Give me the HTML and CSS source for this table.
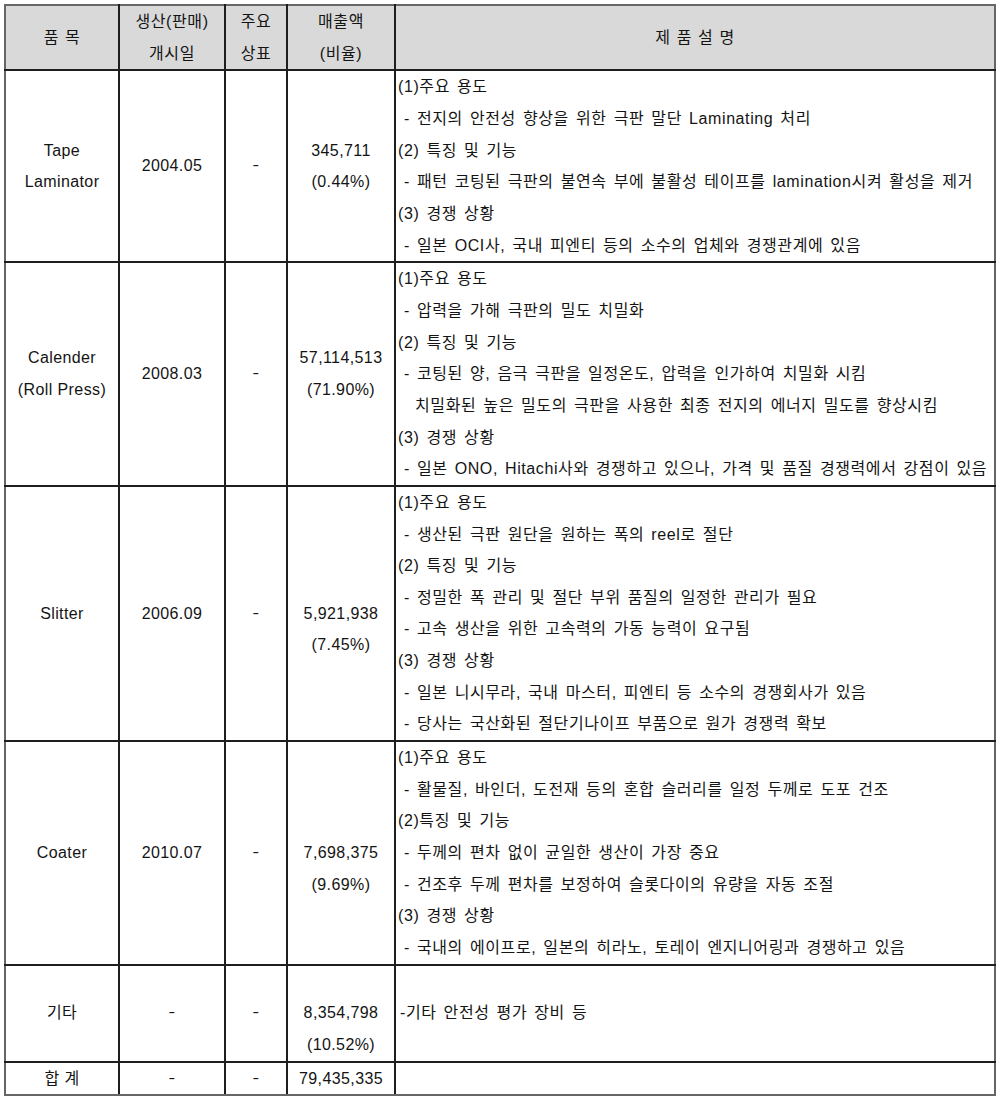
FILE: index.html
```html
<!DOCTYPE html>
<html lang="ko">
<head>
<meta charset="utf-8">
<title>제품 현황</title>
<link rel="stylesheet" href="styles.css">
</head>
<body>
<table class="prod">
  <colgroup>
    <col class="c1"><col class="c2"><col class="c3"><col class="c4"><col class="c5">
  </colgroup>
  <thead>
    <tr>
      <th>품 목</th>
      <th>생산(판매)<br>개시일</th>
      <th>주요<br>상표</th>
      <th>매출액<br>(비율)</th>
      <th>제 품 설 명</th>
    </tr>
  </thead>
  <tbody>
    <tr>
      <td>Tape<br>Laminator</td>
      <td>2004.05</td>
      <td class="dash">-</td>
      <td>345,711<br>(0.44%)</td>
      <td class="desc">
        <div class="h">(1)주요 용도</div>
        <div class="s">- 전지의 안전성 향상을 위한 극판 말단 Laminating 처리</div>
        <div class="h">(2) 특징 및 기능</div>
        <div class="s">- 패턴 코팅된 극판의 불연속 부에 불활성 테이프를 lamination시켜 활성을 제거</div>
        <div class="h">(3) 경쟁 상황</div>
        <div class="s">- 일본 OCI사, 국내 피엔티 등의 소수의 업체와 경쟁관계에 있음</div>
      </td>
    </tr>
    <tr>
      <td>Calender<br>(Roll Press)</td>
      <td>2008.03</td>
      <td class="dash">-</td>
      <td>57,114,513<br>(71.90%)</td>
      <td class="desc">
        <div class="h">(1)주요 용도</div>
        <div class="s">- 압력을 가해 극판의 밀도 치밀화</div>
        <div class="h">(2) 특징 및 기능</div>
        <div class="s">- 코팅된 양, 음극 극판을 일정온도, 압력을 인가하여 치밀화 시킴</div>
        <div class="s2">치밀화된 높은 밀도의 극판을 사용한 최종 전지의 에너지 밀도를 향상시킴</div>
        <div class="h">(3) 경쟁 상황</div>
        <div class="s">- 일본 ONO, Hitachi사와 경쟁하고 있으나, 가격 및 품질 경쟁력에서 강점이 있음</div>
      </td>
    </tr>
    <tr>
      <td>Slitter</td>
      <td>2006.09</td>
      <td class="dash">-</td>
      <td class="lead">5,921,938<br>(7.45%)</td>
      <td class="desc">
        <div class="h">(1)주요 용도</div>
        <div class="s">- 생산된 극판 원단을 원하는 폭의 reel로 절단</div>
        <div class="h">(2) 특징 및 기능</div>
        <div class="s">- 정밀한 폭 관리 및 절단 부위 품질의 일정한 관리가 필요</div>
        <div class="s">- 고속 생산을 위한 고속력의 가동 능력이 요구됨</div>
        <div class="h">(3) 경쟁 상황</div>
        <div class="s">- 일본 니시무라, 국내 마스터, 피엔티 등 소수의 경쟁회사가 있음</div>
        <div class="s">- 당사는 국산화된 절단기나이프 부품으로 원가 경쟁력 확보</div>
      </td>
    </tr>
    <tr>
      <td>Coater</td>
      <td>2010.07</td>
      <td class="dash">-</td>
      <td class="lead">7,698,375<br>(9.69%)</td>
      <td class="desc">
        <div class="h">(1)주요 용도</div>
        <div class="s">- 활물질, 바인더, 도전재 등의 혼합 슬러리를 일정 두께로 도포 건조</div>
        <div class="h">(2)특징 및 기능</div>
        <div class="s">- 두께의 편차 없이 균일한 생산이 가장 중요</div>
        <div class="s">- 건조후 두께 편차를 보정하여 슬롯다이의 유량을 자동 조절</div>
        <div class="h">(3) 경쟁 상황</div>
        <div class="s">- 국내의 에이프로, 일본의 히라노, 토레이 엔지니어링과 경쟁하고 있음</div>
      </td>
    </tr>
    <tr>
      <td>기타</td>
      <td class="dash">-</td>
      <td class="dash">-</td>
      <td class="lead">8,354,798<br>(10.52%)</td>
      <td class="desc mid"><div class="o">-기타 안전성 평가 장비 등</div></td>
    </tr>
    <tr>
      <td>합 계</td>
      <td class="dash">-</td>
      <td class="dash">-</td>
      <td>79,435,335</td>
      <td class="desc"></td>
    </tr>
  </tbody>
</table>
</body>
</html>
```
FILE: styles.css
```css
html, body {
  background: #ffffff;
}
body {
  margin: 4px 0 0 4px;
  font-family: "Liberation Sans", "Noto Sans CJK KR", sans-serif;
  font-size: 16px;
  color: #141414;
}
.prod {
  border-collapse: collapse;
  table-layout: fixed;
  width: 992px;
  border: 2px solid #666666;
}
.c1 { width: 114px; }
.c2 { width: 106px; }
.c3 { width: 62px; }
.c4 { width: 108px; }
.c5 { width: 600px; }

.prod th,
.prod td {
  border: 2px solid #1e1e1e;
  padding: 0;
  line-height: 31.65px;
  text-align: center;
  vertical-align: middle;
  font-weight: normal;
  white-space: nowrap;
  letter-spacing: 0.4px;
  word-spacing: 0;
}
.prod th {
  background: #d9d9d9;
  letter-spacing: 0.6px;
  word-spacing: 1px;
}
.prod thead tr:first-child th {
  border-top-color: #666666;
}
.prod tr th:first-child,
.prod tr td:first-child {
  border-left-color: #666666;
}
.prod tr th:last-child,
.prod tr td:last-child {
  border-right-color: #666666;
}
.prod tbody tr:last-child td {
  border-bottom-color: #666666;
}
.prod td.lead {
  padding-top: 31.65px;
}
.prod td.dash {
  font-family: "DejaVu Sans", sans-serif;
  font-size: 14px;
  transform: scaleX(1.3);
}
.prod td.desc {
  text-align: left;
  vertical-align: top;
  letter-spacing: 0.6px;
  word-spacing: 2px;
}
.prod td.desc.mid {
  vertical-align: middle;
}
.h { padding-left: 2px; }
.s { padding-left: 8px; }
.s2 { padding-left: 19px; }
.o { padding-left: 4px; }
```
